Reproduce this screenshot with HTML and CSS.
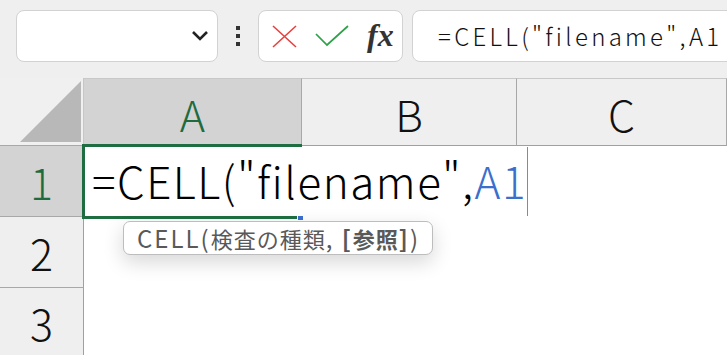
FILE: index.html
```
<!DOCTYPE html>
<html lang="ja">
<head>
    <meta charset="UTF-8">
    <meta name="viewport" content="width=device-width, initial-scale=1.0">
    <title>CELL関数</title>
    <link rel="stylesheet" href="styles.css">
</head>
<body>
    <div class="toolbar">
        <div class="name-box">
            <svg class="chevron" width="18" height="12" viewBox="0 0 18 12">
                <path d="M2 2 L9 9 L16 2" fill="none" stroke="#222" stroke-width="2.6"/>
            </svg>
        </div>
        <div class="dots"><span></span><span></span><span></span></div>
        <div class="fx-buttons">
            <svg width="25" height="23" viewBox="0 0 25 23">
                <path d="M1 1 L24 22 M24 1 L1 22" stroke="#e8403d" stroke-width="1.6"/>
            </svg>
            <svg width="34" height="22" viewBox="0 0 34 22">
                <path d="M1 9 L12 20 L33 1" fill="none" stroke="#2fa14a" stroke-width="1.7"/>
            </svg>
            <span class="fx">fx</span>
        </div>
        <div class="formula-bar">=CELL("filename",A1</div>
    </div>

    <div class="sheet">
        <div class="corner"><div class="triangle"></div></div>
        <div class="col-head selected">A</div>
        <div class="col-head">B</div>
        <div class="col-head">C</div>

        <div class="row-head selected">1</div>
        <div class="cell"></div>
        <div class="cell"></div>
        <div class="cell"></div>

        <div class="row-head">2</div>
        <div class="cell"></div>
        <div class="cell"></div>
        <div class="cell"></div>

        <div class="row-head last">3</div>
        <div class="cell"></div>
        <div class="cell"></div>
        <div class="cell"></div>

        <div class="active-frame"></div>
        <div class="fill-handle"></div>
        <div class="editor">=CELL("filename",<span class="ref">A1</span></div>
        <div class="tooltip"><span class="latin">CELL(</span>検査の種類<span class="latin">, </span><b><span class="latin">[</span>参照<span class="latin">]</span></b><span class="latin">)</span></div>
    </div>
</body>
</html>
```

FILE: styles.css
```
* {
    margin: 0;
    padding: 0;
    box-sizing: border-box;
}

body {
    width: 727px;
    height: 355px;
    overflow: hidden;
    background: #ffffff;
    font-family: "Noto Sans CJK JP", "Noto Sans", sans-serif;
    font-weight: 300;
}

/* formula bar */

.toolbar {
    height: 78px;
    display: flex;
    align-items: flex-start;
    padding: 10px 0 0 16px;
    background: #efefef;
    overflow: hidden;
}

.name-box {
    width: 202px;
    height: 52px;
    background: #fff;
    border: 1px solid #d2d2d2;
    border-radius: 8px;
    display: flex;
    align-items: center;
    justify-content: flex-end;
    padding-right: 8px;
}

.dots {
    width: 40px;
    height: 52px;
    display: flex;
    flex-direction: column;
    align-items: center;
    justify-content: center;
    gap: 4px;
}

.dots span {
    width: 4px;
    height: 4px;
    background: #333;
}

.fx-buttons {
    width: 145px;
    height: 52px;
    background: #fff;
    border: 1px solid #d2d2d2;
    border-radius: 8px;
    display: flex;
    align-items: center;
    padding-left: 13px;
    gap: 18px;
}

.fx {
    font-family: "Liberation Serif", serif;
    font-style: italic;
    font-weight: bold;
    font-size: 32px;
    color: #333;
    margin-top: -2px;
}

.formula-bar {
    flex: 1;
    height: 52px;
    margin-left: 9px;
    margin-right: -20px;
    background: #fff;
    border: 1px solid #d2d2d2;
    border-radius: 8px;
    padding-left: 25px;
    font-size: 24px;
    letter-spacing: 3.3px;
    line-height: 50px;
    color: #111;
    white-space: nowrap;
    overflow: hidden;
}

/* sheet */

.sheet {
    position: relative;
    display: grid;
    grid-template-columns: 84px 218px 215px 1fr;
    grid-template-rows: 68px 71px 71px 1fr;
    height: 277px;
}

.corner {
    background: #f0f0f0;
    border-right: 1px solid #c6c6c6;
    border-bottom: 1px solid #a8a8a8;
    display: flex;
    justify-content: flex-end;
    align-items: flex-end;
    padding: 0 2px 3px 0;
}

.triangle {
    width: 61px;
    height: 61px;
    background: #b8b8b8;
    clip-path: polygon(100% 0, 100% 100%, 0 100%);
}

.col-head,
.row-head {
    display: flex;
    justify-content: center;
    align-items: center;
    background: #efefef;
    color: #111;
    font-size: 43px;
}

.col-head {
    border-top: 1px solid #c8c8c8;
    border-right: 1px solid #a8a8a8;
    border-bottom: 1px solid #a0a0a0;
    padding-top: 2px;
}

.row-head {
    border-right: 1px solid #a0a0a0;
    border-bottom: 1px solid #a8a8a8;
}

.row-head.last {
    border-bottom: none;
}

.col-head.selected,
.row-head.selected {
    background: #d3d3d3;
    color: #1e6b40;
}

.cell {
    background: #fff;
}

.active-frame {
    position: absolute;
    left: 82px;
    top: 66px;
    width: 220px;
    height: 75px;
    border: 3px solid #1e6e42;
}

.fill-handle {
    position: absolute;
    left: 297px;
    top: 138px;
    width: 6px;
    height: 4px;
    background: #3b6fd0;
    border-left: 1px solid #fff;
}

.editor {
    position: absolute;
    left: 85px;
    top: 69px;
    width: 443px;
    height: 69px;
    background: #fff;
    border-right: 1px solid #8a8a8a;
    padding-left: 7px;
    font-size: 44px;
    letter-spacing: 1.5px;
    line-height: 66px;
    color: #000;
    white-space: nowrap;
}

.editor .ref {
    color: #3a6fcc;
}

.tooltip {
    position: absolute;
    left: 123px;
    top: 143px;
    width: 310px;
    height: 34px;
    background: #fff;
    border: 1px solid #bdbdbd;
    border-radius: 7px;
    box-shadow: 0 7px 20px rgba(0, 0, 0, 0.16);
    padding-left: 13px;
    font-size: 22px;
    font-weight: 400;
    letter-spacing: 1px;
    line-height: 31px;
    color: #595959;
    white-space: nowrap;
}

.tooltip .latin {
    font-size: 24px;
    letter-spacing: 2px;
}

.tooltip b {
    font-weight: bold;
}
```
